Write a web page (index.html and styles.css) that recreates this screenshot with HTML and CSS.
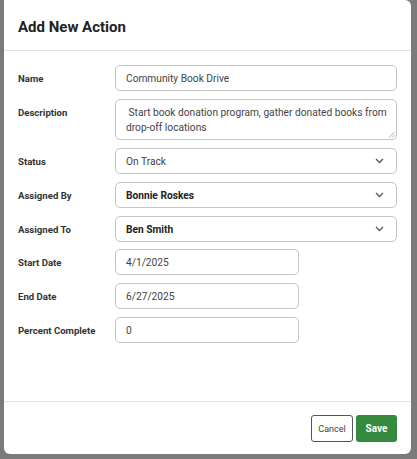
FILE: index.html
```html
<!DOCTYPE html>
<html>
<head>
<meta charset="utf-8">
<link rel="stylesheet" href="styles.css">
</head>
<body>
<div class="modal">
  <div class="modal-header"><h2 class="title">Add New Action</h2></div>
  <div class="modal-body">
    <div class="row">
      <label class="label">Name</label>
      <div class="field">Community Book Drive</div>
    </div>
    <div class="row row-top">
      <label class="label label-top">Description</label>
      <div class="field textarea">&nbsp;Start book donation program, gather donated books from drop-off locations
        <svg class="grip" width="7" height="7" viewBox="0 0 7 7"><path d="M6.5 1 L1 6.5 M6.5 4 L4 6.5" stroke="#999" stroke-width="0.8" fill="none"/></svg>
      </div>
    </div>
    <div class="row">
      <label class="label">Status</label>
      <div class="field select"><span>On Track</span><svg class="chev" width="9" height="6" viewBox="0 0 9 6"><path d="M1 1 L4.5 4.5 L8 1" stroke="#555" stroke-width="1.3" fill="none"/></svg></div>
    </div>
    <div class="row">
      <label class="label">Assigned By</label>
      <div class="field select bold"><span>Bonnie Roskes</span><svg class="chev" width="9" height="6" viewBox="0 0 9 6"><path d="M1 1 L4.5 4.5 L8 1" stroke="#555" stroke-width="1.3" fill="none"/></svg></div>
    </div>
    <div class="row">
      <label class="label">Assigned To</label>
      <div class="field select bold"><span>Ben Smith</span><svg class="chev" width="9" height="6" viewBox="0 0 9 6"><path d="M1 1 L4.5 4.5 L8 1" stroke="#555" stroke-width="1.3" fill="none"/></svg></div>
    </div>
    <div class="row row-tight">
      <label class="label">Start Date</label>
      <div class="field short">4/1/2025</div>
    </div>
    <div class="row">
      <label class="label">End Date</label>
      <div class="field short">6/27/2025</div>
    </div>
    <div class="row">
      <label class="label">Percent Complete</label>
      <div class="field short">0</div>
    </div>
  </div>
  <div class="modal-footer">
    <button class="btn btn-cancel">Cancel</button>
    <button class="btn btn-save">Save</button>
  </div>
</div>
</body>
</html>
```
FILE: styles.css
```css
html, body {
  margin: 0;
  padding: 0;
}
body {
  background: #7b7b7b;
  width: 417px;
  height: 459px;
  overflow: hidden;
  font-family: Roboto, "Liberation Sans", sans-serif;
  color: #333;
}
.modal {
  margin: 0 6px 0 4px;
  width: 407px;
  height: 454px;
  background: #fff;
  border-radius: 0 6px 6px 6px;
  display: flex;
  flex-direction: column;
  box-sizing: border-box;
}
.modal-header {
  height: 51px;
  border-bottom: 1px solid #e3e3e3;
  padding: 0 14px;
  display: flex;
  align-items: center;
  box-sizing: border-box;
  flex: none;
}
.title {
  margin: 0;
  font-size: 15px;
  font-weight: 700;
  color: #222;
  padding-top: 3px;
}
.modal-body {
  flex: 1;
  padding: 14px 14px 0 14px;
  display: flex;
  flex-direction: column;
  gap: 8px;
}
.row {
  display: flex;
  align-items: center;
}
.row-top {
  align-items: flex-start;
}
.row-tight {
  margin-top: -1px;
}
.label {
  width: 97px;
  flex: none;
  font-size: 9.6px;
  font-weight: 700;
  color: #333;
}
.label-top {
  padding-top: 8px;
}
.field {
  flex: 1;
  height: 26px;
  box-sizing: border-box;
  border: 1px solid #c4c4c4;
  border-radius: 5px;
  padding: 0 10px;
  font-family: Roboto, "Liberation Sans", sans-serif;
  font-size: 10.2px;
  color: #444;
  display: flex;
  align-items: center;
}
.textarea {
  height: 41px;
  display: block;
  padding: 5px 0 4px 10px;
  line-height: 15px;
  position: relative;
}
.grip {
  position: absolute;
  right: 1px;
  bottom: 1px;
}
.select {
  justify-content: space-between;
  padding-right: 12px;
}
.bold {
  font-weight: 700;
  color: #222;
}
.short {
  flex: none;
  width: 184px;
}
.modal-footer {
  height: 53px;
  flex: none;
  border-top: 1px solid #e3e3e3;
  box-sizing: border-box;
  display: flex;
  justify-content: flex-end;
  align-items: flex-start;
  padding: 13px 14px 0 0;
  gap: 3px;
}
.btn {
  height: 27px;
  border-radius: 3px;
  font-family: Roboto, "Liberation Sans", sans-serif;
  cursor: pointer;
  margin: 0;
}
.btn-cancel {
  width: 42px;
  background: #fff;
  border: 1px solid #555;
  font-size: 9px;
  color: #444;
  padding: 0;
}
.btn-save {
  width: 41px;
  background: #348a3e;
  border: none;
  color: #fff;
  font-weight: 700;
  font-size: 10px;
  padding: 0;
}
```
